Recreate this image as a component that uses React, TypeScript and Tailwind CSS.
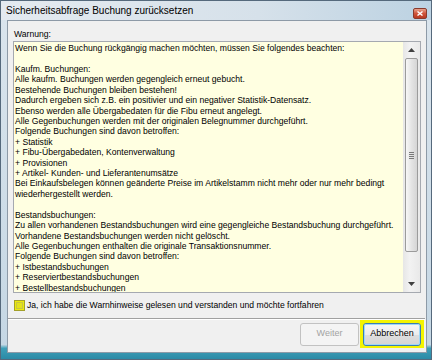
import React from 'react';

const lines = [
  'Wenn Sie die Buchung rückgängig machen möchten, müssen Sie folgendes beachten:',
  '',
  'Kaufm. Buchungen:',
  'Alle kaufm. Buchungen werden gegengleich erneut gebucht.',
  'Bestehende Buchungen bleiben bestehen!',
  'Dadurch ergeben sich z.B. ein positivier und ein negativer Statistik-Datensatz.',
  'Ebenso werden alle Übergabedaten für die Fibu erneut angelegt.',
  'Alle Gegenbuchungen werden mit der originalen Belegnummer durchgeführt.',
  'Folgende Buchungen sind davon betroffen:',
  '+ Statistik',
  '+ Fibu-Übergabedaten, Kontenverwaltung',
  '+ Provisionen',
  '+ Artikel- Kunden- und Lieferantenumsätze',
  'Bei Einkaufsbelegen können geänderte Preise im Artikelstamm nicht mehr oder nur mehr bedingt',
  'wiederhergestellt werden.',
  '',
  'Bestandsbuchungen:',
  'Zu allen vorhandenen Bestandsbuchungen wird eine gegengleiche Bestandsbuchung durchgeführt.',
  'Vorhandene Bestandsbuchungen werden nicht gelöscht.',
  'Alle Gegenbuchungen enthalten die originale Transaktionsnummer.',
  'Folgende Buchungen sind davon betroffen:',
  '+ Istbestandsbuchungen',
  '+ Reserviertbestandsbuchungen',
  '+ Bestellbestandsbuchungen',
];

const ScrollBar: React.FC = () => (
  <div className="w-[17px] shrink-0 flex flex-col bg-[linear-gradient(to_right,#e6e6e6,#f2f2f2_40%,#e9e9e9)]">
    {/* up arrow */}
    <div className="h-[16px] flex items-center justify-center">
      <svg width="7" height="4" viewBox="0 0 7 4">
        <path d="M0 4 L3.5 0 L7 4 Z" fill="#404040" />
      </svg>
    </div>
    {/* thumb */}
    <div className="mx-[2px] h-[194px] rounded-[2px] border border-[#9b9b9b] bg-[linear-gradient(to_right,#f7f7f7,#e4e4e4_50%,#d5d5d5)] flex items-center justify-center">
      <div className="flex flex-col gap-[1px]">
        <div className="w-[5px] h-[1px] bg-[#7a7a7a]" />
        <div className="w-[5px] h-[1px] bg-[#7a7a7a]" />
        <div className="w-[5px] h-[1px] bg-[#7a7a7a]" />
        <div className="w-[5px] h-[1px] bg-[#7a7a7a]" />
      </div>
    </div>
    <div className="flex-1" />
    {/* down arrow */}
    <div className="h-[16px] flex items-center justify-center">
      <svg width="7" height="4" viewBox="0 0 7 4">
        <path d="M0 0 L7 0 L3.5 4 Z" fill="#404040" />
      </svg>
    </div>
  </div>
);

const App: React.FC = () => {
  return (
    <div className="w-[432px] h-[360px] overflow-hidden flex flex-col border border-[#55697c] bg-[linear-gradient(to_bottom,#dbe5ed_0%,#c5d7e4_96%,#3e9fb8_97%,#2b8aa6_100%)] font-['Liberation_Sans',Arial,sans-serif] text-black">
      {/* title bar */}
      <div className="h-[19px] shrink-0 flex items-center justify-between pl-[5px] pr-[4px] bg-[linear-gradient(to_right,#e4eaf0,#d6e1ea_60%,#bcd2e2)]">
        <span className="text-[10px] leading-[12px] mt-[1px] whitespace-nowrap">
          Sicherheitsabfrage Buchung zurücksetzen
        </span>
        <div className="mt-[6px] w-[14px] h-[11px] rounded-[2px] border border-[#8a3a2c] bg-[linear-gradient(to_bottom,#e8a48f,#d0543a_50%,#b83a22)] flex items-center justify-center">
          <svg width="6" height="5" viewBox="0 0 6 5">
            <path d="M0.5 0.5 L5.5 4.5 M5.5 0.5 L0.5 4.5" stroke="#ffffff" strokeWidth="1.4" />
          </svg>
        </div>
      </div>

      {/* client area */}
      <div className="ml-[6px] mr-[4px] mb-[6px] flex-1 flex flex-col bg-[#f0f0f0] border border-[#8d9aa7] text-[8.6px]">
        <div className="pt-[6px] pl-[6px] h-[20px] leading-[14px]">
          Warnung:
        </div>

        <div className="mx-[5px] h-[252px] flex border border-[#a5a9b0] bg-[#ffffe1] overflow-hidden">
          <div className="flex-1 pt-[1px] pl-[1px] overflow-hidden">
            {lines.map((line, i) => (
              <div key={i} className="h-[10.43px] leading-[10.43px] whitespace-nowrap">
                {line || '\u00a0'}
              </div>
            ))}
          </div>
          <ScrollBar />
        </div>

        <div className="mt-[7px] ml-[6px] h-[11px] flex items-center gap-[2px]">
          <div className="w-[11px] h-[11px] border border-[#a3a02a] bg-[#ecea0c] flex items-center justify-center">
            <div className="w-[7px] h-[7px] border border-[#c9c640] bg-[#e4e21a]" />
          </div>
          <span className="leading-[11px] whitespace-nowrap">
            Ja, ich habe die Warnhinweise gelesen und verstanden und möchte fortfahren
          </span>
        </div>

        <div className="mt-[7px] mr-[1px] h-[2px] border-t border-[#a0a0a0] bg-white" />

        <div className="flex justify-end items-center gap-[1px] mr-[2px] h-[28px]">
          <div className="w-[59px] h-[23px] rounded-[3px] border border-[#c2c2c2] bg-[#f4f4f4] flex items-center justify-center text-[#a3a3a3] text-[9px]">
            Weiter
          </div>
          <div className="w-[64px] h-[28px] bg-[#f4f400] flex items-center justify-center">
            <div className="w-[58px] h-[23px] rounded-[3px] border border-[#3c7fb1] bg-[linear-gradient(to_bottom,#eaf6fd,#d9f0fc_50%,#bee6fd_51%,#a7d9f5)] flex items-center justify-center text-[9px]">
              <div className="w-[56px] h-[21px] rounded-[2px] border border-[#9fd8f7] bg-[linear-gradient(to_bottom,#f6f6f6,#ececec_50%,#dedede_51%,#d6d6d6)] flex items-center justify-center">
                Abbrechen
              </div>
            </div>
          </div>
        </div>
      </div>
    </div>
  );
};

export default App;
